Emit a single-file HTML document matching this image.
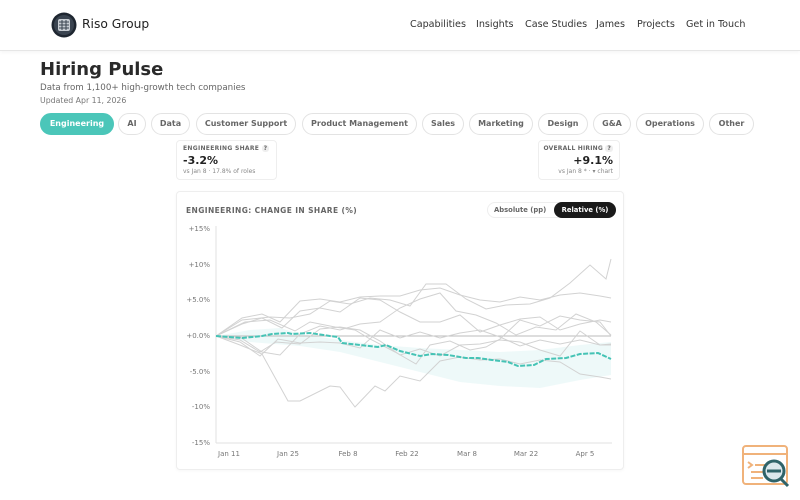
<!DOCTYPE html>
<html><head><meta charset="utf-8"><style>
*{margin:0;padding:0;box-sizing:border-box}
body{width:800px;height:500px;overflow:hidden;background:#fff;font-family:"DejaVu Sans","Liberation Sans",sans-serif;color:#222;position:relative}
.hdr{position:absolute;left:0;top:0;width:800px;height:51px;border-bottom:1px solid #e6e6e6;box-shadow:0 1px 4px rgba(0,0,0,.05)}
.nav{position:absolute;top:19px;font-size:9.6px;color:#333;white-space:nowrap}
.pill{position:absolute;top:113px;height:22px;border:1px solid #e3e3e3;border-radius:11px;font-size:8px;font-weight:bold;color:#666;text-align:center;line-height:20px;white-space:nowrap}
.card{position:absolute;border:1px solid #eee;border-radius:4px;background:#fff}
</style></head><body>
<div class="hdr">
 <svg style="position:absolute;left:51px;top:12px" width="26" height="26" viewBox="0 0 26 26"><circle cx="13" cy="13" r="12.5" fill="#1e2630"/><circle cx="13" cy="13" r="10" fill="#3a4450"/><rect x="7" y="7" width="12" height="12" rx="2" fill="#c7ccd2"/><path d="M8 10h10M8 13h10M8 16h10M11 8v10M15 8v10" stroke="#3a4450" stroke-width="1"/></svg>
 <div style="position:absolute;left:82px;top:17px;font-size:12.3px;color:#222">Riso Group</div>
 <div class="nav" style="left:410px">Capabilities</div>
 <div class="nav" style="left:476px">Insights</div>
 <div class="nav" style="left:525px">Case Studies</div>
 <div class="nav" style="left:596px">James</div>
 <div class="nav" style="left:637px">Projects</div>
 <div class="nav" style="left:686px">Get in Touch</div>
</div>
<div style="position:absolute;left:40px;top:59px;font-size:18px;font-weight:bold;color:#2a2a2a">Hiring Pulse</div>
<div style="position:absolute;left:40px;top:83px;font-size:8.7px;color:#666">Data from 1,100+ high-growth tech companies</div>
<div style="position:absolute;left:40px;top:96px;font-size:7.8px;color:#777">Updated Apr 11, 2026</div>
<div class="pill" style="left:40px;width:74px;background:#4bc6b9;border-color:#4bc6b9;color:#fff">Engineering</div>
<div class="pill" style="left:118px;width:28px">AI</div>
<div class="pill" style="left:151px;width:39px">Data</div>
<div class="pill" style="left:196px;width:100px">Customer Support</div>
<div class="pill" style="left:302px;width:115px">Product Management</div>
<div class="pill" style="left:422px;width:42px">Sales</div>
<div class="pill" style="left:469px;width:64px">Marketing</div>
<div class="pill" style="left:538px;width:50px">Design</div>
<div class="pill" style="left:593px;width:38px">G&amp;A</div>
<div class="pill" style="left:636px;width:68px">Operations</div>
<div class="pill" style="left:709px;width:45px">Other</div>

<div class="card" style="left:176px;top:140px;width:101px;height:40px">
 <div style="position:absolute;left:6px;top:4px;font-size:6px;font-weight:bold;color:#666;letter-spacing:.3px;white-space:nowrap">ENGINEERING SHARE <span style="background:#eee;border-radius:3px;padding:0 2px">?</span></div>
 <div style="position:absolute;left:6px;top:13px;font-size:11px;font-weight:bold;color:#222">-3.2%</div>
 <div style="position:absolute;left:6px;top:27px;font-size:6px;color:#888;white-space:nowrap">vs Jan 8 · 17.8% of roles</div>
</div>
<div class="card" style="left:538px;top:140px;width:82px;height:40px">
 <div style="position:absolute;right:6px;top:4px;font-size:6px;font-weight:bold;color:#666;letter-spacing:.2px;white-space:nowrap">OVERALL HIRING <span style="background:#eee;border-radius:3px;padding:0 2px">?</span></div>
 <div style="position:absolute;right:6px;top:13px;font-size:11px;font-weight:bold;color:#222">+9.1%</div>
 <div style="position:absolute;right:6px;top:27px;font-size:6px;color:#888;white-space:nowrap">vs Jan 8 * · ▾ chart</div>
</div>

<div class="card" style="left:176px;top:191px;width:448px;height:279px;box-shadow:0 1px 3px rgba(0,0,0,.04)">
 <div style="position:absolute;left:9px;top:14px;font-size:7.5px;font-weight:bold;color:#666;letter-spacing:.4px;white-space:nowrap">ENGINEERING: CHANGE IN SHARE (%)</div>
 <div style="position:absolute;left:310px;top:10px;width:128px;height:16px;border-radius:8px;border:1px solid #eee;font-size:6.8px;font-weight:bold;white-space:nowrap">
  <span style="position:absolute;left:6px;top:3px;color:#666">Absolute (pp)</span>
  <span style="position:absolute;left:66px;top:-1px;width:62px;height:16px;background:#1a1a1a;color:#fff;border-radius:8px;text-align:center;line-height:16px">Relative (%)</span>
 </div>
</div>
<svg style="position:absolute;left:0;top:0" width="800" height="500" viewBox="0 0 800 500">
 <g font-size="7" fill="#777" text-anchor="end" font-family="DejaVu Sans,sans-serif">
  <text x="210" y="231">+15%</text><text x="210" y="267">+10%</text><text x="210" y="302">+5.0%</text><text x="210" y="338">+0.0%</text><text x="210" y="374">-5.0%</text><text x="210" y="409">-10%</text><text x="210" y="445">-15%</text>
 </g>
 <g font-size="7" fill="#777" text-anchor="middle" font-family="DejaVu Sans,sans-serif">
  <text x="229" y="456">Jan 11</text><text x="288" y="456">Jan 25</text><text x="348" y="456">Feb 8</text><text x="407" y="456">Feb 22</text><text x="467" y="456">Mar 8</text><text x="526" y="456">Mar 22</text><text x="585" y="456">Apr 5</text>
 </g>
 <line x1="216" y1="226" x2="216" y2="443" stroke="#e2e2e2"/>
 <line x1="216" y1="443" x2="612" y2="443" stroke="#e2e2e2"/>
 <path d="M216 336 L250 330 L280 328 L300 334 L340 340 L380 345 L420 348 L460 350 L500 352 L540 350 L580 345 L611 342 L611 375 L580 380 L540 388 L500 386 L460 382 L420 372 L380 362 L340 352 L300 346 L250 342 Z" fill="#e3f5f5" opacity=".6"/>
 <line x1="216" y1="336" x2="611" y2="336" stroke="#bbb" stroke-width="1"/>
 <g fill="none" stroke="#d2d2d2" stroke-width="1">
  <path d="M216 336 L242 318 L262 314 L280 322 L300 301 L320 299 L340 302 L360 297 L380 296 L400 296 L420 290 L440 288 L460 295 L480 300 L500 302 L520 297 L540 300 L560 295 L580 293 L600 296 L611 298"/>
  <path d="M216 336 L242 320 L270 317 L290 318 L310 314 L330 301 L350 304 L370 298 L390 300 L410 306 L426 284 L446 284 L466 299 L486 309 L506 305 L530 304 L550 298 L570 283 L590 265 L606 279 L611 259"/>
  <path d="M216 336 L242 324 L262 318 L282 328 L300 311 L320 308 L340 312 L360 298 L380 300 L400 312 L420 322 L440 322 L460 315 L480 332 L500 325 L520 319 L540 317 L560 330 L580 324 L600 320 L611 322"/>
  <path d="M216 336 L240 337 L262 352 L280 355 L300 334 L320 326 L340 330 L360 324 L380 322 L400 308 L420 299 L440 293 L456 311 L476 315 L496 323 L516 335 L536 327 L556 330 L576 314 L596 322 L611 335"/>
  <path d="M216 336 L240 342 L260 356 L278 339 L300 343 L320 342 L340 343 L360 348 L380 330 L400 338 L420 332 L440 338 L460 333 L480 330 L500 337 L520 346 L540 340 L560 344 L580 340 L600 345 L611 344"/>
  <path d="M216 336 L240 345 L262 354 L288 401 L300 401 L330 386 L340 387 L355 407 L375 386 L385 391 L400 376 L420 381 L440 361 L460 357 L480 360 L500 359 L520 364 L540 360 L560 362 L580 374 L600 377 L611 379"/>
  <path d="M216 336 L240 340 L260 352 L276 342 L300 344 L320 329 L340 327 L360 330 L380 341 L400 355 L420 349 L440 356 L460 345 L480 344 L500 340 L520 342 L540 350 L560 356 L580 331 L600 345 L611 345"/>
  <path d="M216 336 L245 322 L270 320 L295 331 L310 322 L335 327 L355 330 L370 339 L395 352 L416 364 L430 345 L450 341 L470 350 L486 347 L500 339 L520 320 L540 326 L560 316 L580 320 L600 322 L611 336"/>
 </g>
 <polyline fill="none" stroke="#45c3b5" stroke-width="2" stroke-dasharray="5 1.5" points="216,336 242,338 262,336 272,334 288,333 292,334 310,333 330,336 338,337 342,343 360,345 378,347 386,345 400,351 420,356 432,354 448,355 466,358 478,358 492,360 508,362 518,366 534,365 546,359 566,358 580,354 598,353 611,359"/>
</svg>
<svg style="position:absolute;left:741px;top:444px" width="52" height="45" viewBox="0 0 52 45">
 <rect x="2" y="2" width="44" height="38" rx="3" fill="#fff" stroke="#f0b27a" stroke-width="2"/>
 <line x1="2" y1="10" x2="46" y2="10" stroke="#f0b27a" stroke-width="2"/>
 <path d="M7 18l4 3-4 3M14 21h14M10 28h18M10 34h12" stroke="#f0b27a" stroke-width="2" fill="none"/>
 <circle cx="33" cy="27" r="10" fill="#dbe7ec" stroke="#2f6369" stroke-width="3"/>
 <path d="M26 27h14M40 35l7 7" stroke="#2f6369" stroke-width="3"/>
</svg>
</body></html>
